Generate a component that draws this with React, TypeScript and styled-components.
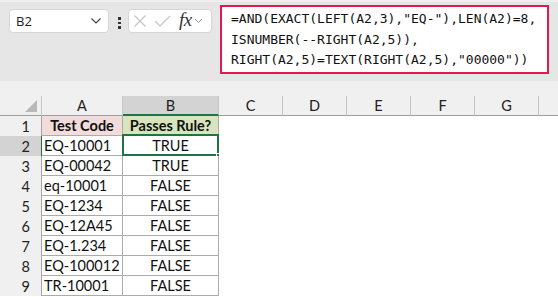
import styled, { createGlobalStyle } from "styled-components";

const GlobalStyle = createGlobalStyle`
  html, body {
    margin: 0;
    padding: 0;
    background: #ffffff;
  }
  * {
    box-sizing: border-box;
  }
`;

const COLUMNS = ["A", "B", "C", "D", "E", "F", "G"];

const rows = [
  { code: "EQ-10001", result: "TRUE" },
  { code: "EQ-00042", result: "TRUE" },
  { code: "eq-10001", result: "FALSE" },
  { code: "EQ-1234", result: "FALSE" },
  { code: "EQ-12A45", result: "FALSE" },
  { code: "EQ-1.234", result: "FALSE" },
  { code: "EQ-100012", result: "FALSE" },
  { code: "TR-10001", result: "FALSE" },
];

const formulaLines = [
  '=AND(EXACT(LEFT(A2,3),"EQ-"),LEN(A2)=8,',
  "ISNUMBER(--RIGHT(A2,5)),",
  'RIGHT(A2,5)=TEXT(RIGHT(A2,5),"00000"))',
];

function Chevron() {
  return (
    <svg width="12" height="8" viewBox="0 0 12 8">
      <path d="M1.5 1.5 L6 6 L10.5 1.5" fill="none" stroke="#444" strokeWidth="1.2" />
    </svg>
  );
}

function App() {
  return (
    <>
      <GlobalStyle />
      <Sheet>
        {/* formula bar */}
        <Toolbar>
          <NameBox>
            <NameText>B2</NameText>
            <Chevron />
          </NameBox>
          <Dots>
            <span />
            <span />
            <span />
          </Dots>
          <FxBox>
            <svg width="12" height="12" viewBox="0 0 12 12">
              <path d="M0.5 0.5 L11.5 11.5 M11.5 0.5 L0.5 11.5" stroke="#c4c4c4" strokeWidth="1.1" fill="none" />
            </svg>
            <svg width="17" height="12" viewBox="0 0 17 12">
              <path d="M1 6 L6 11 L16 1" stroke="#c4c4c4" strokeWidth="1.1" fill="none" />
            </svg>
            <FxText>fx</FxText>
            <svg width="9" height="6" viewBox="0 0 9 6">
              <path d="M1 1 L4.5 4.5 L8 1" fill="none" stroke="#9a9a9a" strokeWidth="1" />
            </svg>
          </FxBox>
          <FormulaBox>
            {formulaLines.map((line) => (
              <FormulaLine key={line}>{line}</FormulaLine>
            ))}
          </FormulaBox>
        </Toolbar>

        <Spacer />

        {/* grid */}
        <Grid>
          <HeadCell>
            <Corner />
          </HeadCell>
          {COLUMNS.map((c) => (
            <HeadCell key={c} $active={c === "B"}>
              {c}
            </HeadCell>
          ))}
          <HeadCell $last />

          <RowHead>1</RowHead>
          <Cell $bg="#f2dcdb" $bold $center $bordered>
            Test Code
          </Cell>
          <Cell $bg="#d8e4bc" $bold $center $bordered>
            Passes Rule?
          </Cell>
          {COLUMNS.slice(2).map((c) => (
            <Cell key={c} />
          ))}
          <Cell />

          {rows.map((r, i) => {
            const selected = i === 0;
            return [
              <RowHead key={`h${i}`} $active={selected}>
                {i + 2}
              </RowHead>,
              <Cell key={`a${i}`} $bordered>
                {r.code}
              </Cell>,
              <Cell key={`b${i}`} $center $bordered>
                {r.result}
                {selected && (
                  <Selection>
                    <FillHandle />
                  </Selection>
                )}
              </Cell>,
              ...COLUMNS.slice(2).map((c) => <Cell key={`${c}${i}`} />),
              <Cell key={`z${i}`} />,
            ];
          })}
        </Grid>
      </Sheet>
    </>
  );
}

export default App;

const Sheet = styled.div`
  width: 558px;
  height: 297px;
  overflow: hidden;
  background: #ffffff;
  font-family: Lato, "Liberation Sans", sans-serif;
`;

// toolbar styles
const Toolbar = styled.div`
  height: 81px;
  background: #e6e6e6;
  border-top: 2px solid #f0f0f0;
  display: flex;
  align-items: flex-start;
  padding: 3px 6px 0 9px;
`;

const NameBox = styled.div`
  margin-top: 4px;
  width: 100px;
  height: 24px;
  background: #ffffff;
  border: 1px solid #d6d6d6;
  border-radius: 4px;
  display: flex;
  align-items: center;
  justify-content: space-between;
  padding: 0 6px 0 6px;
`;

const NameText = styled.span`
  font-family: "Open Sans", "Noto Sans", sans-serif;
  font-size: 13px;
  color: #222;
`;

const Dots = styled.div`
  margin: 12px 7px 0 9px;
  display: flex;
  flex-direction: column;
  gap: 2px;

  span {
    display: block;
    width: 3px;
    height: 2.5px;
    background: #333;
  }
`;

const FxBox = styled.div`
  margin-top: 4px;
  width: 84px;
  height: 24px;
  background: #ffffff;
  border: 1px solid #d6d6d6;
  border-radius: 4px;
  display: flex;
  align-items: center;
  padding: 0 3px 0 5px;
  gap: 8px;
`;

const FxText = styled.span`
  font-family: "Liberation Serif", serif;
  font-style: italic;
  font-size: 19px;
  line-height: 20px;
  color: #333;
  margin-left: 0;
  margin-right: -6px;
  margin-top: -3px;
  letter-spacing: -0.5px;
`;

const FormulaBox = styled.div`
  margin-left: 8px;
  width: 329px;
  height: 69px;
  background: #ffffff;
  border: 2px solid #e3194d;
  padding: 2px 0 0 9px;
  display: flex;
  flex-direction: column;
`;

const FormulaLine = styled.div`
  font-family: "DejaVu Sans Mono", "Liberation Mono", monospace;
  font-size: 13px;
  line-height: 20.5px;
  color: #111;
  white-space: pre;
`;

const Spacer = styled.div`
  height: 15px;
  background: #f0f0f0;
`;

// grid styles
const Grid = styled.div`
  display: grid;
  grid-template-columns: 42px 81px 96px repeat(5, 64px) 1fr;
  grid-auto-rows: 20px;
`;

const HeadCell = styled.div<{ $active?: boolean; $last?: boolean }>`
  position: relative;
  background: ${(p) => (p.$active ? "#d3d3d3" : "#f0f0f0")};
  border-right: ${(p) => (p.$last ? "none" : "1px solid #c6c6c6")};
  border-bottom: ${(p) => (p.$active ? "2px solid #217346" : "1px solid #9e9e9e")};
  font-size: 14.5px;
  color: #222;
  display: flex;
  align-items: center;
  justify-content: center;
  padding-top: ${(p) => (p.$active ? "1px" : "0")};
`;

const Corner = styled.div`
  position: absolute;
  right: 4px;
  bottom: 3px;
  width: 0;
  height: 0;
  border-left: 12px solid transparent;
  border-bottom: 12px solid #b8b8b8;
`;

const RowHead = styled.div<{ $active?: boolean }>`
  background: ${(p) => (p.$active ? "#d3d3d3" : "#f0f0f0")};
  border-right: 1px solid ${(p) => (p.$active ? "#217346" : "#a6a6a6")};
  font-size: 14.5px;
  color: #222;
  display: flex;
  align-items: center;
  justify-content: flex-end;
  padding-right: 11px;
`;

const Cell = styled.div<{
  $bg?: string;
  $bold?: boolean;
  $center?: boolean;
  $bordered?: boolean;
}>`
  position: relative;
  background: ${(p) => p.$bg || "#ffffff"};
  border-right: ${(p) => (p.$bordered ? "1px solid #ababab" : "none")};
  border-bottom: ${(p) => (p.$bordered ? "1px solid #ababab" : "none")};
  font-size: 14.5px;
  font-weight: ${(p) => (p.$bold ? 700 : 400)};
  color: #111;
  display: flex;
  align-items: center;
  justify-content: ${(p) => (p.$center ? "center" : "flex-start")};
  padding-left: ${(p) => (p.$center ? "0" : "2px")};
  white-space: nowrap;
`;

const Selection = styled.div`
  position: absolute;
  left: -1px;
  top: -2px;
  right: -1px;
  bottom: -1px;
  border: 2px solid #217346;
  pointer-events: none;
`;

const FillHandle = styled.div`
  position: absolute;
  right: -5px;
  bottom: -5px;
  width: 6px;
  height: 6px;
  background: #217346;
  border: 1px solid #ffffff;
`;
